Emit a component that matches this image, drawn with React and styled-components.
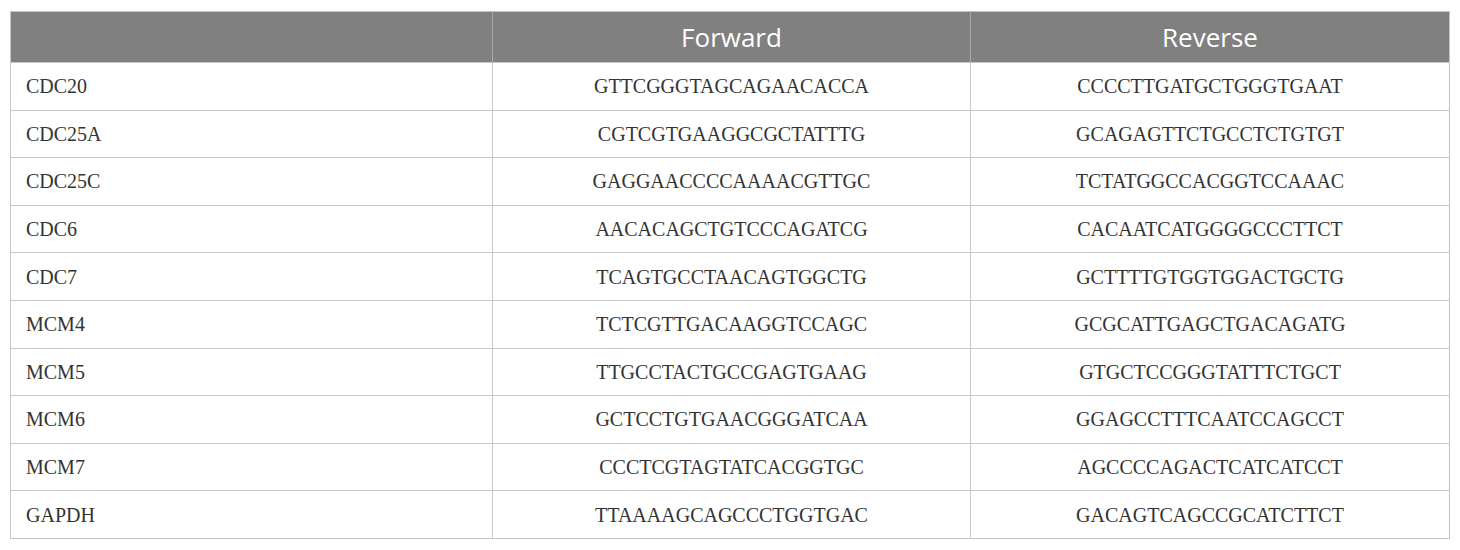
import React from "react";
import styled, { createGlobalStyle } from "styled-components";

const rows = [
  ["CDC20", "GTTCGGGTAGCAGAACACCA", "CCCCTTGATGCTGGGTGAAT"],
  ["CDC25A", "CGTCGTGAAGGCGCTATTTG", "GCAGAGTTCTGCCTCTGTGT"],
  ["CDC25C", "GAGGAACCCCAAAACGTTGC", "TCTATGGCCACGGTCCAAAC"],
  ["CDC6", "AACACAGCTGTCCCAGATCG", "CACAATCATGGGGCCCTTCT"],
  ["CDC7", "TCAGTGCCTAACAGTGGCTG", "GCTTTTGTGGTGGACTGCTG"],
  ["MCM4", "TCTCGTTGACAAGGTCCAGC", "GCGCATTGAGCTGACAGATG"],
  ["MCM5", "TTGCCTACTGCCGAGTGAAG", "GTGCTCCGGGTATTTCTGCT"],
  ["MCM6", "GCTCCTGTGAACGGGATCAA", "GGAGCCTTTCAATCCAGCCT"],
  ["MCM7", "CCCTCGTAGTATCACGGTGC", "AGCCCCAGACTCATCATCCT"],
  ["GAPDH", "TTAAAAGCAGCCCTGGTGAC", "GACAGTCAGCCGCATCTTCT"],
];

const App = () => {
  return (
    <>
      <GlobalStyle />
      <Page>
        <Table>
          <thead>
            <tr>
              <HeadCell />
              <HeadCell>Forward</HeadCell>
              <HeadCell>Reverse</HeadCell>
            </tr>
          </thead>
          <tbody>
            {rows.map(([gene, fwd, rev]) => (
              <tr key={gene}>
                <Cell>{gene}</Cell>
                <Cell $center>{fwd}</Cell>
                <Cell $center>{rev}</Cell>
              </tr>
            ))}
          </tbody>
        </Table>
      </Page>
    </>
  );
};

export default App;

const GlobalStyle = createGlobalStyle`
  body {
    margin: 0;
    background: #fff;
  }
`;

const Page = styled.div`
  padding: 11px 10px 0 10px;
`;

const Table = styled.table`
  width: 1440px;
  border-collapse: collapse;
  table-layout: fixed;
  border: 1px solid #c4c4c4;
`;

const HeadCell = styled.th`
  background: #808080;
  color: #fff;
  font-family: "Open Sans", sans-serif;
  font-weight: 400;
  font-size: 26px;
  line-height: 1;
  height: 49px;
  padding: 0 0 1px 0;
  text-align: center;
  border-left: 1px solid #a8a8a8;
  &:first-child {
    width: 481px;
    border-left: none;
  }
  &:nth-child(2) {
    width: 477px;
  }
`;

const Cell = styled.td`
  font-family: "Liberation Serif", serif;
  font-size: 20px;
  line-height: 1;
  color: #333;
  height: 46.6px;
  padding: 0 0 0 15px;
  text-align: ${(p) => (p.$center ? "center" : "left")};
  ${(p) => p.$center && "padding: 0;"}
  border-top: 1px solid #c8c8c8;
  border-left: 1px solid #c8c8c8;
`;
